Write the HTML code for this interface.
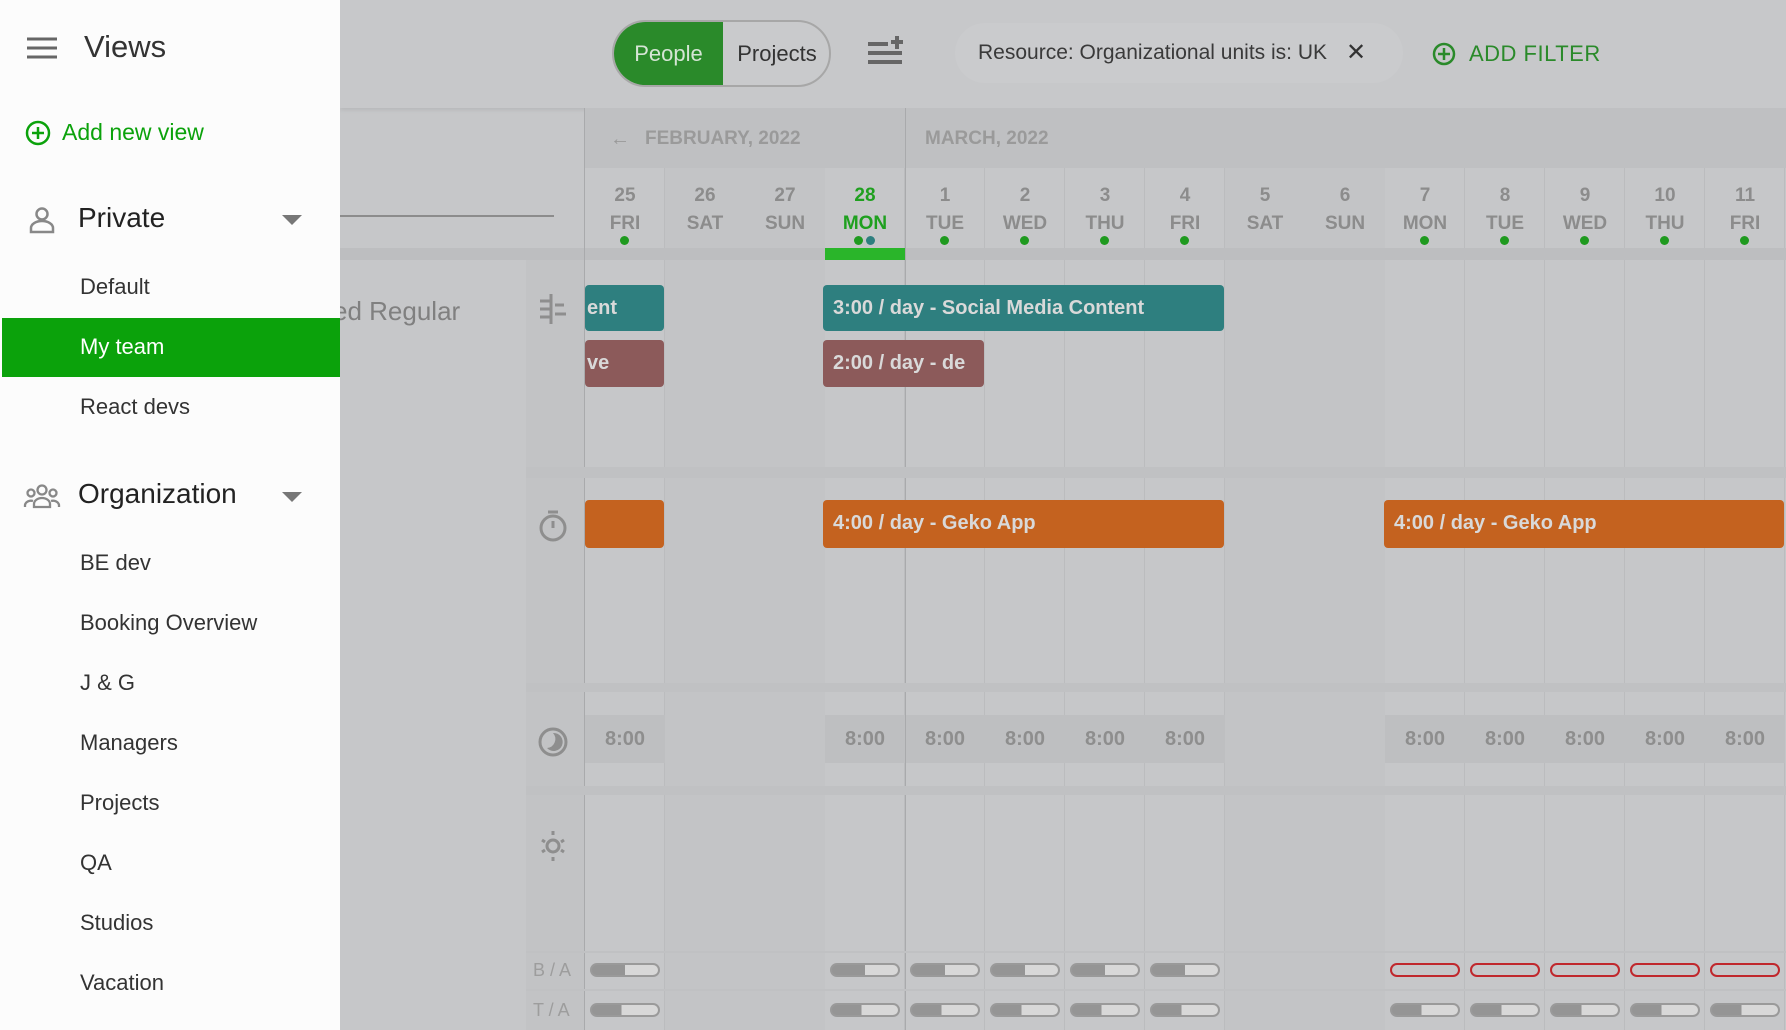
<!DOCTYPE html>
<html><head><meta charset="utf-8"><style>
*{margin:0;padding:0;box-sizing:border-box}
body{width:1786px;height:1030px;overflow:hidden;background:#c6c7c9;font-family:"Liberation Sans",sans-serif;position:relative}
.a{position:absolute}
.top{left:340px;top:0;width:1446px;height:108px;background:#c7c8ca;box-shadow:0 2px 4px rgba(0,0,0,.08)}
.sb{left:0;top:0;width:340px;height:1030px;background:#fcfcfc}
.mi{position:absolute;left:80px;font-size:22px;color:#333;transform:translateY(-50%)}
.col{position:absolute;top:168px;width:80px;height:862px;border-right:1px solid #bbbcbe}
.dn{position:absolute;width:80px;text-align:center;font-size:19px;color:#8c8c8c;font-weight:bold}
.ev{position:absolute;border-radius:4px;color:#d9d9d9;font-weight:bold;font-size:20px;line-height:46px;padding-left:10px;white-space:nowrap;overflow:hidden}
.hr{position:absolute;width:80px;height:48px;top:715px;background:#bebfc1;text-align:center;line-height:48px;font-size:20px;color:#8e8e8e;font-weight:bold}
.tg{position:absolute;width:70px;height:14px;border-radius:7px;border:2px solid #9a9a9a;background:linear-gradient(90deg,#959595 50%,#d8d8d8 50%)}
.tr{border-color:#c0282d;background:transparent}
</style></head><body>
<div class="a top"></div>
<div class="a" style="left:612px;top:20px;width:219px;height:67px;border:2px solid #a7a7a7;border-radius:34px;overflow:hidden;background:#c9cacc">
<div class="a" style="left:0;top:0;width:109px;height:67px;background:#2a8a2a"></div>
<div class="a" style="left:0;top:0;width:109px;line-height:63px;text-align:center;color:#d5e5d5;font-size:22px">People</div>
<div class="a" style="left:109px;top:0;width:108px;line-height:63px;text-align:center;color:#333;font-size:22px">Projects</div>
</div>
<svg class="a" style="left:866px;top:34px" width="40" height="34"><g stroke="#666" stroke-width="4"><line x1="2" y1="10" x2="22" y2="10"/><line x1="2" y1="19" x2="36" y2="19"/><line x1="2" y1="28" x2="36" y2="28"/><line x1="31" y1="2" x2="31" y2="15"/><line x1="25" y1="8" x2="37" y2="8"/></g></svg>
<div class="a" style="left:955px;top:23px;width:448px;height:60px;border-radius:30px;background:#cacbcd"></div>
<div class="a" style="left:978px;top:41px;font-size:21px;color:#3a3a3a">Resource: Organizational units is: UK</div>
<div class="a" style="left:1346px;top:38px;font-size:24px;color:#333">✕</div>
<svg class="a" style="left:1432px;top:42px" width="24" height="24"><circle cx="12" cy="12" r="10" fill="none" stroke="#2a8a2a" stroke-width="2.5"/><path d="M12 6v12M6 12h12" stroke="#2a8a2a" stroke-width="2.5"/></svg>
<div class="a" style="left:1469px;top:41px;font-size:22px;color:#2a8a2a;letter-spacing:.5px">ADD FILTER</div>
<div class="a" style="left:585px;top:108px;width:1201px;height:60px;background:#bfc0c2"></div>
<div class="a" style="left:610px;top:128px;font-size:20px;color:#999">←</div>
<div class="a" style="left:645px;top:128px;font-size:19px;color:#9a9a9a;font-weight:bold">FEBRUARY, 2022</div>
<div class="a" style="left:925px;top:128px;font-size:19px;color:#9a9a9a;font-weight:bold">MARCH, 2022</div>
<div class="a" style="left:340px;top:215px;width:214px;height:2px;background:#8c8c8c"></div>
<div class="a" style="left:526px;top:260px;width:59px;height:770px;background:#c2c3c5"></div>
<div class="a" style="left:333px;top:296px;font-size:26px;color:#808080">ed Regular</div>
<div id="grid"></div>
<div class="a" style="left:340px;top:248px;width:1446px;height:12px;background:#bdbec0"></div>
<div class="a" style="left:825px;top:248px;width:80px;height:12px;background:#2ab52a"></div>
<div class="a" style="left:584px;top:108px;width:1px;height:922px;background:#a9aaac"></div>
<div class="a" style="left:905px;top:108px;width:1px;height:922px;background:#a9aaac"></div>
<div class="a" style="left:526px;top:467px;width:1260px;height:11px;background:#c0c1c3"></div>
<div class="a" style="left:526px;top:683px;width:1260px;height:9px;background:#c0c1c3"></div>
<div class="a" style="left:526px;top:786px;width:1260px;height:9px;background:#c0c1c3"></div>
<div class="a" style="left:526px;top:951px;width:1260px;height:2px;background:#c0c1c3"></div>
<div class="a" style="left:526px;top:989px;width:1260px;height:2px;background:#c0c1c3"></div>
<div class="ev" style="left:585px;top:285px;width:79px;height:46px;background:#2e7f7f;padding-left:2px">ent</div>
<div class="ev" style="left:823px;top:285px;width:401px;height:46px;background:#2e7f7f">3:00 / day - Social Media Content</div>
<div class="ev" style="left:585px;top:340px;width:79px;height:47px;background:#8c5a5a;padding-left:2px">ve</div>
<div class="ev" style="left:823px;top:340px;width:161px;height:47px;background:#8c5a5a">2:00 / day - de</div>
<div class="ev" style="left:585px;top:500px;width:79px;height:48px;background:#c4621f"></div>
<div class="ev" style="left:823px;top:500px;width:401px;height:48px;background:#c4621f">4:00 / day - Geko App</div>
<div class="ev" style="left:1384px;top:500px;width:400px;height:48px;background:#c4621f">4:00 / day - Geko App</div>
<svg class="a" style="left:538px;top:292px" width="30" height="34"><g stroke="#8e8e8e" stroke-width="3"><line x1="13" y1="2" x2="13" y2="32"/><line x1="2" y1="9" x2="13" y2="9"/><line x1="2" y1="17" x2="13" y2="17"/><line x1="17" y1="13" x2="26" y2="13"/><line x1="17" y1="22" x2="28" y2="22"/><line x1="2" y1="25" x2="13" y2="25"/></g></svg>
<svg class="a" style="left:538px;top:509px" width="30" height="34"><circle cx="15" cy="19" r="12" fill="none" stroke="#8e8e8e" stroke-width="3"/><path d="M10 3h10M15 19v-7" stroke="#8e8e8e" stroke-width="3"/></svg>
<svg class="a" style="left:538px;top:725px" width="30" height="34"><circle cx="15" cy="17" r="13" fill="none" stroke="#8e8e8e" stroke-width="3"/><path d="M15 8a9 9 0 1 1 -6 15a9 9 0 0 0 6-15z" fill="#8e8e8e"/></svg>
<svg class="a" style="left:538px;top:829px" width="30" height="34"><circle cx="15" cy="17" r="6" fill="none" stroke="#8e8e8e" stroke-width="3"/><g stroke="#8e8e8e" stroke-width="3"><line x1="15" y1="2" x2="15" y2="6"/><line x1="15" y1="28" x2="15" y2="32"/><line x1="4" y1="11" x2="7" y2="13"/><line x1="26" y1="11" x2="23" y2="13"/><line x1="4" y1="23" x2="7" y2="21"/><line x1="26" y1="23" x2="23" y2="21"/></g></svg>
<div class="a" style="left:533px;top:960px;font-size:18px;color:#9d9d9d">B / A</div>
<div class="a" style="left:533px;top:1000px;font-size:18px;color:#9d9d9d">T / A</div>
<div class="a sb">
<svg class="a" style="left:27px;top:37px" width="30" height="22"><g stroke="#666" stroke-width="3"><line x1="0" y1="2" x2="30" y2="2"/><line x1="0" y1="11" x2="30" y2="11"/><line x1="0" y1="20" x2="30" y2="20"/></g></svg>
<div class="a" style="left:84px;top:29px;font-size:31px;color:#333">Views</div>
<svg class="a" style="left:25px;top:120px" width="26" height="26"><circle cx="13" cy="13" r="11" fill="none" stroke="#0ba20b" stroke-width="2.5"/><path d="M13 7v12M7 13h12" stroke="#0ba20b" stroke-width="2.5"/></svg>
<div class="a" style="left:62px;top:119px;font-size:23px;color:#0ba20b">Add new view</div>
<svg class="a" style="left:28px;top:206px" width="28" height="28"><circle cx="14" cy="8" r="5.5" fill="none" stroke="#888" stroke-width="2.5"/><path d="M3 26v-4a11 7 0 0 1 22 0v4z" fill="none" stroke="#888" stroke-width="2.5"/></svg>
<div class="a" style="left:78px;top:202px;font-size:28px;color:#222">Private</div>
<div class="a" style="left:282px;top:215px;border-left:10px solid transparent;border-right:10px solid transparent;border-top:10px solid #777"></div>
<div class="mi" style="top:287px">Default</div>
<div class="a" style="left:2px;top:318px;width:338px;height:59px;background:#0ba20b"></div>
<div class="mi" style="top:347px;color:#fff">My team</div>
<div class="mi" style="top:407px">React devs</div>
<svg class="a" style="left:23px;top:483px" width="38" height="26"><g fill="none" stroke="#888" stroke-width="2.3"><circle cx="19" cy="7" r="4.5"/><circle cx="8" cy="10" r="3.5"/><circle cx="30" cy="10" r="3.5"/><path d="M11 24v-3a8 6 0 0 1 16 0v3z"/><path d="M2 24v-2a6 5 0 0 1 8-4"/><path d="M36 24v-2a6 5 0 0 0 -8-4"/></g></svg>
<div class="a" style="left:78px;top:478px;font-size:28px;color:#222">Organization</div>
<div class="a" style="left:282px;top:492px;border-left:10px solid transparent;border-right:10px solid transparent;border-top:10px solid #777"></div>
<div class="mi" style="top:563px">BE dev</div>
<div class="mi" style="top:623px">Booking Overview</div>
<div class="mi" style="top:683px">J &amp; G</div>
<div class="mi" style="top:743px">Managers</div>
<div class="mi" style="top:803px">Projects</div>
<div class="mi" style="top:863px">QA</div>
<div class="mi" style="top:923px">Studios</div>
<div class="mi" style="top:983px">Vacation</div>
</div>
<script>
var d=[["25","FRI"],["26","SAT"],["27","SUN"],["28","MON"],["1","TUE"],["2","WED"],["3","THU"],["4","FRI"],["5","SAT"],["6","SUN"],["7","MON"],["8","TUE"],["9","WED"],["10","THU"],["11","FRI"]];
var h="";
d.forEach(function(x,i){var l=585+80*i;var we=(x[1]=="SAT"||x[1]=="SUN");var c=i==3?"#1fa01f":"#8c8c8c";
h+='<div class="col" style="left:'+l+'px;'+(we?'background:#c3c4c6;border-right-color:#c3c4c6':'')+'"></div>';
h+='<div class="dn" style="left:'+l+'px;top:185px;color:'+c+'">'+x[0]+'</div>';
h+='<div class="dn" style="left:'+l+'px;top:213px;color:'+c+'">'+x[1]+'</div>';
if(!we){if(i==3){h+='<div class="a" style="left:'+(l+29)+'px;top:236px;width:9px;height:9px;border-radius:50%;background:#1f9a1f"></div><div class="a" style="left:'+(l+41)+'px;top:236px;width:9px;height:9px;border-radius:50%;background:#2e7f7f"></div>';}
else h+='<div class="a" style="left:'+(l+35)+'px;top:236px;width:9px;height:9px;border-radius:50%;background:#1f9a1f"></div>';
h+='<div class="hr" style="left:'+l+'px">8:00</div>';
var red=i>=10;
h+='<div class="tg'+(red?' tr':'')+'" style="left:'+(l+5)+'px;top:963px"></div>';
h+='<div class="tg" style="left:'+(l+5)+'px;top:1003px;background:linear-gradient(90deg,#959595 45%,#d8d8d8 45%)"></div>';}
});
document.getElementById("grid").innerHTML=h;
</script>
</body></html>
